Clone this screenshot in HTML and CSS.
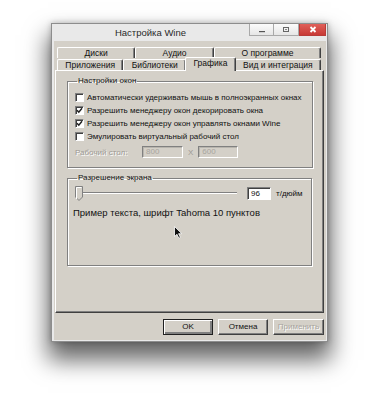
FILE: index.html
```html
<!DOCTYPE html>
<html lang="ru">
<head>
<meta charset="utf-8">
<title>Настройка Wine</title>
<link rel="stylesheet" href="styles.css">
</head>
<body>
<div class="stage">
  <div class="window">
    <div class="titlebar">
      <div class="title">Настройка Wine</div>
      <div class="caption-buttons">
        <div class="cbtn min"><svg width="8" height="6" viewBox="0 0 8 6"><rect x="1" y="4" width="6" height="1.2" fill="#555"/></svg></div>
        <div class="cbtn max"><svg width="8" height="7" viewBox="0 0 8 7"><rect x="1.5" y="1.5" width="5" height="4" fill="none" stroke="#666" stroke-width="1"/><rect x="3" y="3" width="2" height="1" fill="#888"/></svg></div>
        <div class="cbtn close"><svg width="8" height="7" viewBox="0 0 8 7"><path d="M1.5 1 L6.5 6 M6.5 1 L1.5 6" stroke="#fff" stroke-width="1.8"/></svg></div>
      </div>
    </div>
    <div class="client">
      <div class="tabrow back">
        <div class="tab">Диски</div>
        <div class="tab">Аудио</div>
        <div class="tab">О программе</div>
      </div>
      <div class="tabrow front">
        <div class="tab">Приложения</div>
        <div class="tab">Библиотеки</div>
        <div class="tab selected">Графика</div>
        <div class="tab">Вид и интеграция</div>
      </div>
      <div class="panel">
        <fieldset class="group g1">
          <legend>Настройки окон</legend>
          <div class="check-row"><span class="checkbox"></span><span>Автоматически удерживать мышь в полноэкранных окнах</span></div>
          <div class="check-row"><span class="checkbox"><svg width="7" height="7" viewBox="0 0 7 7"><path d="M1 3.2 L2.8 5.2 L6 1.2" fill="none" stroke="#222" stroke-width="1.5"/></svg></span><span>Разрешить менеджеру окон декорировать окна</span></div>
          <div class="check-row"><span class="checkbox"><svg width="7" height="7" viewBox="0 0 7 7"><path d="M1 3.2 L2.8 5.2 L6 1.2" fill="none" stroke="#222" stroke-width="1.5"/></svg></span><span>Разрешить менеджеру окон управлять окнами Wine</span></div>
          <div class="check-row"><span class="checkbox"></span><span>Эмулировать виртуальный рабочий стол</span></div>
          <div class="desk-row">
            <span class="desk-label">Рабочий стол:</span>
            <span class="field disabled w1">800</span>
            <span class="times">X</span>
            <span class="field disabled w2">600</span>
          </div>
        </fieldset>
        <fieldset class="group g2">
          <legend>Разрешение экрана</legend>
          <div class="dpi-row">
            <svg class="slider" width="165" height="15" viewBox="0 0 165 15">
              <rect x="4" y="6" width="158" height="1" fill="#808080"/>
              <rect x="4" y="7" width="158" height="1" fill="#ffffff"/>
              <path d="M0.5 0.5 H7.5 V11 L4 14.5 L0.5 11 Z" fill="#d4d0c8" stroke="#808080" stroke-width="1"/>
              <path d="M1.5 13 V1.5 H6.5" fill="none" stroke="#ffffff" stroke-width="1"/>
            </svg>
            <span class="field dpi">96</span>
            <span class="unit">т/дюйм</span>
          </div>
          <div class="sample">Пример текста, шрифт Tahoma 10 пунктов</div>
        </fieldset>
      </div>
      <div class="buttons">
        <div class="btn default">OK</div>
        <div class="btn">Отмена</div>
        <div class="btn disabled">Применить</div>
      </div>
    </div>
  </div>
</div>
<svg class="cursor" width="10" height="13" viewBox="0 0 10 13"><path d="M0.5 0.5 L0.5 10.5 L3 8.3 L4.8 12.2 L6.4 11.5 L4.6 7.7 L7.8 7.7 Z" fill="#111" stroke="#fff" stroke-width="0.8"/></svg>
</body>
</html>
```

FILE: styles.css
```css
html, body {
  margin: 0;
  padding: 0;
  background: #ffffff;
}

body {
  font-family: "Liberation Sans", Arial, sans-serif;
  font-size: 8px;
  color: #111111;
  width: 378px;
  height: 400px;
  overflow: hidden;
  position: relative;
}

.stage {
  padding: 23px 0 0 51px;
}

.window {
  box-sizing: border-box;
  width: 277px;
  height: 319px;
  border: 1px solid #8d8d8d;
  background: #e9e9e9;
  display: flex;
  flex-direction: column;
  box-shadow: 0 0 6px rgba(0, 0, 0, 0.25), 0 15px 22px 3px rgba(0, 0, 0, 0.6);
}

.titlebar {
  height: 17px;
  display: flex;
  align-items: flex-start;
  flex: none;
}

.title {
  flex: 1;
  text-align: center;
  line-height: 18px;
  font-size: 9.5px;
  color: #2a2a2a;
}

.caption-buttons {
  display: flex;
  margin-right: 1px;
}

.cbtn {
  box-sizing: border-box;
  height: 12px;
  width: 25px;
  display: flex;
  align-items: center;
  justify-content: center;
  border: 1px solid #a9a9a9;
  border-top: none;
  background: linear-gradient(#fbfbfb, #e6e6e6);
}

.cbtn.max {
  border-left: none;
}

.cbtn.close {
  width: 27px;
  border-color: #b83b38;
  background: linear-gradient(#e0605a, #c83a35);
}

.client {
  flex: 1;
  margin: 0 1px 1px 2px;
  background: #d4d0c8;
  display: flex;
  flex-direction: column;
  padding-top: 6px;
}

.tabrow {
  display: flex;
  margin: 0 5px 0 3px;
  font-size: 8.5px;
}

.tabrow.back {
  height: 11px;
}

.tabrow.front {
  height: 12px;
}

.tab {
  flex: 1 1 auto;
  box-sizing: border-box;
  text-align: center;
  line-height: 10px;
  border-top: 1px solid #ffffff;
  border-left: 1px solid #ffffff;
  border-right: 1px solid #404040;
  box-shadow: inset -1px 0 0 #808080;
  border-radius: 2px 2px 0 0;
  white-space: nowrap;
}

.tabrow.front .tab {
  margin-top: 1px;
}

.tabrow.front .tab.selected {
  margin: -1px -1px 0 -1px;
  height: 14px;
  line-height: 11px;
  background: #d4d0c8;
  position: relative;
  z-index: 2;
}

.panel {
  box-sizing: border-box;
  height: 243px;
  margin: 0 2px 0 1px;
  border-top: 1px solid #ffffff;
  border-left: 1px solid #ffffff;
  border-right: 1px solid #404040;
  border-bottom: 1px solid #404040;
  box-shadow: inset -1px -1px 0 #808080;
  display: flex;
  flex-direction: column;
}

.group {
  margin: 0;
  padding: 0;
  border: 1px solid #808080;
  box-shadow: 1px 1px 0 #ffffff, inset 1px 1px 0 #ffffff;
  min-width: 0;
}

.group legend {
  padding: 0 1px;
  margin-left: 2px;
  line-height: 10px;
}

.g1 {
  margin: 5px 10px 0 11px;
  padding: 5px 0 9px 7px;
}

.g2 {
  margin: 5px 11px 0 11px;
  padding: 3px 0 46px 7px;
}

.check-row {
  display: flex;
  align-items: center;
  height: 13px;
  white-space: nowrap;
}

.checkbox {
  box-sizing: border-box;
  width: 9px;
  height: 9px;
  margin-right: 3px;
  background: #ffffff;
  border-top: 1px solid #808080;
  border-left: 1px solid #808080;
  border-right: 1px solid #ffffff;
  border-bottom: 1px solid #ffffff;
  box-shadow: inset 1px 1px 0 #404040;
  display: flex;
  align-items: center;
  justify-content: center;
  flex: none;
}

.desk-row {
  display: flex;
  align-items: center;
  height: 12px;
  margin-top: 3px;
  color: #9d9a94;
}

.desk-label {
  width: 67px;
  text-shadow: 1px 1px 0 #ffffff;
}

.times {
  margin: 0 5px;
}

.field {
  box-sizing: border-box;
  height: 12px;
  line-height: 10px;
  padding-left: 3px;
  border-top: 1px solid #808080;
  border-left: 1px solid #808080;
  border-right: 1px solid #ffffff;
  border-bottom: 1px solid #ffffff;
  box-shadow: inset 1px 1px 0 #404040;
}

.field.disabled {
  background: #d4d0c8;
  color: #a8a59e;
  box-shadow: inset 1px 1px 0 #b8b5ae;
}

.w1 {
  width: 41px;
}

.w2 {
  width: 40px;
}

.dpi-row {
  display: flex;
  align-items: center;
  height: 15px;
}

.slider {
  display: block;
  flex: none;
}

.field.dpi {
  width: 24px;
  height: 13px;
  line-height: 11px;
  background: #ffffff;
  margin-left: 7px;
}

.unit {
  margin-left: 5px;
}

.sample {
  font-size: 9.5px;
  line-height: 12px;
  margin-top: 6px;
  margin-left: -2px;
  color: #111111;
}

.buttons {
  display: flex;
  justify-content: flex-end;
  gap: 5px;
  margin-top: 6px;
  padding-right: 2px;
}

.btn {
  box-sizing: border-box;
  width: 50px;
  height: 16px;
  line-height: 13px;
  text-align: center;
  border-top: 1px solid #ffffff;
  border-left: 1px solid #ffffff;
  border-right: 1px solid #404040;
  border-bottom: 1px solid #404040;
  box-shadow: inset -1px -1px 0 #808080;
}

.btn.default {
  border: 1px solid #202020;
  box-shadow: inset 1px 1px 0 #ffffff, inset -2px -2px 0 #808080;
}

.btn.disabled {
  width: 51px;
  color: #a8a59e;
  text-shadow: 1px 1px 0 #ffffff;
}

.cursor {
  position: absolute;
  left: 174px;
  top: 226px;
}
```
